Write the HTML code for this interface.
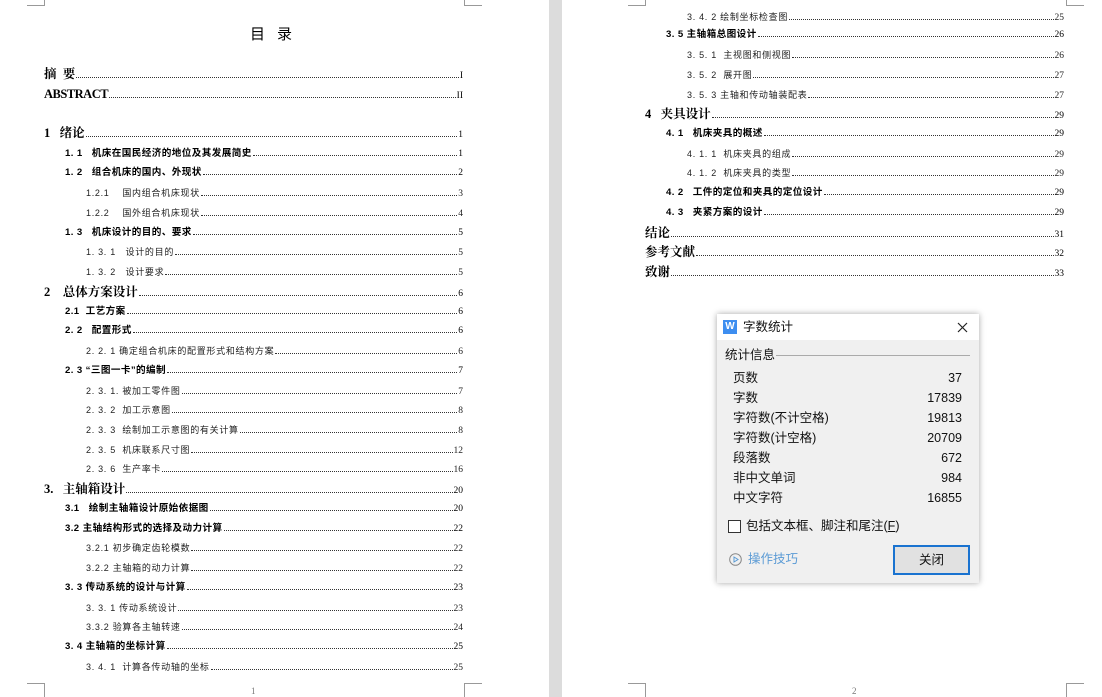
<!DOCTYPE html>
<html><head><meta charset="utf-8">
<style>
*{margin:0;padding:0;box-sizing:border-box}
body{width:1102px;height:697px;background:#fff;position:relative;overflow:hidden;font-family:"Liberation Serif","Noto Serif CJK SC","Noto Sans CJK SC",serif;color:#000}
.gap{position:absolute;left:549px;top:0;width:13px;height:697px;background:#dcdcdc}
.r{position:absolute;display:flex;align-items:baseline;height:16px;line-height:16px;white-space:nowrap}
.r .d{flex:1;border-bottom:1px dotted #333;margin:0 1px}
.l1{font-size:12.5px;font-weight:bold}
.l2{font-size:9.6px;font-weight:bold;font-family:"Liberation Sans","Noto Sans CJK SC",sans-serif;letter-spacing:.4px}
.l3{font-size:9px;font-family:"Liberation Sans","Noto Sans CJK SC",sans-serif;color:#222;letter-spacing:.7px}
.n{font-size:9.5px;font-family:"Liberation Serif",serif;font-weight:normal;letter-spacing:0}
.mk{position:absolute;background:#999}
.dlg{position:absolute;left:717px;top:314px;width:262px;height:269px;background:#f0f0f0;box-shadow:0 0 6px rgba(0,0,0,.35);font-family:"Liberation Sans","Noto Sans CJK SC",sans-serif;font-size:12px;color:#111;line-height:16px}
.tb{height:26px;background:#fff;position:relative}
.row{position:absolute;left:16px;width:229px;display:flex;justify-content:space-between;align-items:baseline;font-size:12.5px;line-height:16px}
</style></head><body>
<div class="gap"></div>
<div class="mk" style="left:27px;top:5px;width:18px;height:1px"></div>
<div class="mk" style="left:44px;top:0;width:1px;height:5px"></div>
<div class="mk" style="left:464px;top:5px;width:18px;height:1px"></div>
<div class="mk" style="left:464px;top:0;width:1px;height:5px"></div>
<div class="mk" style="left:27px;top:683px;width:18px;height:1px"></div>
<div class="mk" style="left:44px;top:683px;width:1px;height:14px"></div>
<div class="mk" style="left:464px;top:683px;width:18px;height:1px"></div>
<div class="mk" style="left:464px;top:683px;width:1px;height:14px"></div>
<div style="position:absolute;left:251px;top:686px;font-size:9px;color:#777">1</div>
<div class="mk" style="left:628px;top:5px;width:18px;height:1px"></div>
<div class="mk" style="left:645px;top:0;width:1px;height:5px"></div>
<div class="mk" style="left:1066px;top:5px;width:18px;height:1px"></div>
<div class="mk" style="left:1066px;top:0;width:1px;height:5px"></div>
<div class="mk" style="left:628px;top:683px;width:18px;height:1px"></div>
<div class="mk" style="left:645px;top:683px;width:1px;height:14px"></div>
<div class="mk" style="left:1066px;top:683px;width:18px;height:1px"></div>
<div class="mk" style="left:1066px;top:683px;width:1px;height:14px"></div>
<div style="position:absolute;left:852px;top:686px;font-size:9px;color:#777">2</div>

<div style="position:absolute;left:250px;top:24px;font-size:15px;font-family:'Noto Sans CJK SC',sans-serif;letter-spacing:12px;line-height:20px">目录</div>

<div class="r l1" style="left:44px;width:419px;top:66px"><span>摘&nbsp;&nbsp;要</span><span class="d"></span><span class="n">I</span></div>
<div class="r l1" style="left:44px;width:419px;top:86px"><span style="letter-spacing:-.5px">ABSTRACT</span><span class="d"></span><span class="n">II</span></div>
<div class="r l1" style="left:44px;width:419px;top:125px"><span>1&nbsp;&nbsp;&nbsp;绪论</span><span class="d"></span><span class="n">1</span></div>
<div class="r l2" style="left:65px;width:398px;top:146px"><span>1. 1&nbsp;&nbsp; 机床在国民经济的地位及其发展简史</span><span class="d"></span><span class="n">1</span></div>
<div class="r l2" style="left:65px;width:398px;top:165px"><span>1. 2&nbsp;&nbsp; 组合机床的国内、外现状</span><span class="d"></span><span class="n">2</span></div>
<div class="r l3" style="left:86px;width:377px;top:185px"><span>1.2.1&nbsp;&nbsp;&nbsp; 国内组合机床现状</span><span class="d"></span><span class="n">3</span></div>
<div class="r l3" style="left:86px;width:377px;top:205px"><span>1.2.2&nbsp;&nbsp;&nbsp; 国外组合机床现状</span><span class="d"></span><span class="n">4</span></div>
<div class="r l2" style="left:65px;width:398px;top:225px"><span>1. 3&nbsp;&nbsp; 机床设计的目的、要求</span><span class="d"></span><span class="n">5</span></div>
<div class="r l3" style="left:86px;width:377px;top:244px"><span>1. 3. 1&nbsp;&nbsp; 设计的目的</span><span class="d"></span><span class="n">5</span></div>
<div class="r l3" style="left:86px;width:377px;top:264px"><span>1. 3. 2&nbsp;&nbsp; 设计要求</span><span class="d"></span><span class="n">5</span></div>
<div class="r l1" style="left:44px;width:419px;top:284px"><span>2&nbsp;&nbsp;&nbsp;&nbsp;总体方案设计</span><span class="d"></span><span class="n">6</span></div>
<div class="r l2" style="left:65px;width:398px;top:304px"><span>2.1&nbsp; 工艺方案</span><span class="d"></span><span class="n">6</span></div>
<div class="r l2" style="left:65px;width:398px;top:323px"><span>2. 2&nbsp;&nbsp; 配置形式</span><span class="d"></span><span class="n">6</span></div>
<div class="r l3" style="left:86px;width:377px;top:343px"><span>2. 2. 1 确定组合机床的配置形式和结构方案</span><span class="d"></span><span class="n">6</span></div>
<div class="r l2" style="left:65px;width:398px;top:363px"><span>2. 3 “三图一卡”的编制</span><span class="d"></span><span class="n">7</span></div>
<div class="r l3" style="left:86px;width:377px;top:383px"><span>2. 3. 1. 被加工零件图</span><span class="d"></span><span class="n">7</span></div>
<div class="r l3" style="left:86px;width:377px;top:402px"><span>2. 3. 2&nbsp; 加工示意图</span><span class="d"></span><span class="n">8</span></div>
<div class="r l3" style="left:86px;width:377px;top:422px"><span>2. 3. 3&nbsp; 绘制加工示意图的有关计算</span><span class="d"></span><span class="n">8</span></div>
<div class="r l3" style="left:86px;width:377px;top:442px"><span>2. 3. 5&nbsp; 机床联系尺寸图</span><span class="d"></span><span class="n">12</span></div>
<div class="r l3" style="left:86px;width:377px;top:461px"><span>2. 3. 6&nbsp; 生产率卡</span><span class="d"></span><span class="n">16</span></div>
<div class="r l1" style="left:44px;width:419px;top:481px"><span>3.&nbsp;&nbsp;&nbsp;主轴箱设计</span><span class="d"></span><span class="n">20</span></div>
<div class="r l2" style="left:65px;width:398px;top:501px"><span>3.1&nbsp;&nbsp; 绘制主轴箱设计原始依据图</span><span class="d"></span><span class="n">20</span></div>
<div class="r l2" style="left:65px;width:398px;top:521px"><span>3.2 主轴结构形式的选择及动力计算</span><span class="d"></span><span class="n">22</span></div>
<div class="r l3" style="left:86px;width:377px;top:540px"><span>3.2.1 初步确定齿轮模数</span><span class="d"></span><span class="n">22</span></div>
<div class="r l3" style="left:86px;width:377px;top:560px"><span>3.2.2 主轴箱的动力计算</span><span class="d"></span><span class="n">22</span></div>
<div class="r l2" style="left:65px;width:398px;top:580px"><span>3. 3 传动系统的设计与计算</span><span class="d"></span><span class="n">23</span></div>
<div class="r l3" style="left:86px;width:377px;top:600px"><span>3. 3. 1 传动系统设计</span><span class="d"></span><span class="n">23</span></div>
<div class="r l3" style="left:86px;width:377px;top:619px"><span>3.3.2 验算各主轴转速</span><span class="d"></span><span class="n">24</span></div>
<div class="r l2" style="left:65px;width:398px;top:639px"><span>3. 4 主轴箱的坐标计算</span><span class="d"></span><span class="n">25</span></div>
<div class="r l3" style="left:86px;width:377px;top:659px"><span>3. 4. 1&nbsp; 计算各传动轴的坐标</span><span class="d"></span><span class="n">25</span></div>

<div class="r l3" style="left:687px;width:377px;top:9px"><span>3. 4. 2 绘制坐标检查图</span><span class="d"></span><span class="n">25</span></div>
<div class="r l2" style="left:666px;width:398px;top:27px"><span>3. 5 主轴箱总图设计</span><span class="d"></span><span class="n">26</span></div>
<div class="r l3" style="left:687px;width:377px;top:47px"><span>3. 5. 1&nbsp; 主视图和侧视图</span><span class="d"></span><span class="n">26</span></div>
<div class="r l3" style="left:687px;width:377px;top:67px"><span>3. 5. 2&nbsp; 展开图</span><span class="d"></span><span class="n">27</span></div>
<div class="r l3" style="left:687px;width:377px;top:87px"><span>3. 5. 3 主轴和传动轴装配表</span><span class="d"></span><span class="n">27</span></div>
<div class="r l1" style="left:645px;width:419px;top:106px"><span>4&nbsp;&nbsp;&nbsp;夹具设计</span><span class="d"></span><span class="n">29</span></div>
<div class="r l2" style="left:666px;width:398px;top:126px"><span>4. 1&nbsp;&nbsp; 机床夹具的概述</span><span class="d"></span><span class="n">29</span></div>
<div class="r l3" style="left:687px;width:377px;top:146px"><span>4. 1. 1&nbsp; 机床夹具的组成</span><span class="d"></span><span class="n">29</span></div>
<div class="r l3" style="left:687px;width:377px;top:165px"><span>4. 1. 2&nbsp; 机床夹具的类型</span><span class="d"></span><span class="n">29</span></div>
<div class="r l2" style="left:666px;width:398px;top:185px"><span>4. 2&nbsp;&nbsp; 工件的定位和夹具的定位设计</span><span class="d"></span><span class="n">29</span></div>
<div class="r l2" style="left:666px;width:398px;top:205px"><span>4. 3&nbsp;&nbsp; 夹紧方案的设计</span><span class="d"></span><span class="n">29</span></div>
<div class="r l1" style="left:645px;width:419px;top:225px"><span>结论</span><span class="d"></span><span class="n">31</span></div>
<div class="r l1" style="left:645px;width:419px;top:244px"><span>参考文献</span><span class="d"></span><span class="n">32</span></div>
<div class="r l1" style="left:645px;width:419px;top:264px"><span>致谢</span><span class="d"></span><span class="n">33</span></div>

<div class="dlg">
 <div class="tb">
  <div style="position:absolute;left:6px;top:6px;width:14px;height:14px;background:#3d8ef0;color:#fff;font-size:10px;line-height:14px;text-align:center;font-weight:bold">W</div>
  <div style="position:absolute;left:26px;top:5px;font-size:12.5px;line-height:16px">字数统计</div>
  <svg style="position:absolute;left:240px;top:8px" width="11" height="11"><path d="M1 1L10 10M10 1L1 10" stroke="#222" stroke-width="1.2"/></svg>
 </div>
 <div style="position:absolute;left:8px;top:33px;font-size:12.5px">统计信息</div>
 <div style="position:absolute;left:59px;top:41px;width:194px;height:1px;background:#aaa"></div>
 <div class="row" style="top:56px"><span>页数</span><span>37</span></div>
 <div class="row" style="top:76px"><span>字数</span><span>17839</span></div>
 <div class="row" style="top:96px"><span>字符数(不计空格)</span><span>19813</span></div>
 <div class="row" style="top:116px"><span>字符数(计空格)</span><span>20709</span></div>
 <div class="row" style="top:136px"><span>段落数</span><span>672</span></div>
 <div class="row" style="top:156px"><span>非中文单词</span><span>984</span></div>
 <div class="row" style="top:176px"><span>中文字符</span><span>16855</span></div>
 <div style="position:absolute;left:11px;top:206px;width:13px;height:13px;border:1px solid #333;background:#fff"></div>
 <div style="position:absolute;left:29px;top:204px;font-size:12.5px">包括文本框、脚注和尾注(<u>F</u>)</div>
 <svg style="position:absolute;left:12px;top:239px" width="13" height="13"><circle cx="6.5" cy="6.5" r="5.8" fill="none" stroke="#888"/><path d="M5 4L9 6.5L5 9Z" fill="none" stroke="#5b9bd5"/></svg>
 <div style="position:absolute;left:31px;top:237px;font-size:12.5px;color:#5b9bd5">操作技巧</div>
 <div style="position:absolute;left:176px;top:231px;width:77px;height:30px;border:2px solid #1a73d0;background:#e1e1e1;text-align:center;line-height:26px;font-size:12.5px">关闭</div>
</div>
</body></html>
